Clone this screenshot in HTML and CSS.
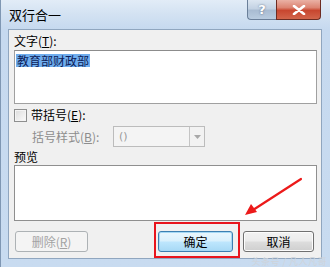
FILE: index.html
```html
<!DOCTYPE html>
<html lang="zh-CN">
<head>
<meta charset="utf-8">
<title>双行合一</title>
<link rel="stylesheet" href="styles.css">
</head>
<body>
<div class="window">
  <div class="titlebar">
    <span class="title">双行合一</span>
    <div class="caption-btns">
      <div class="cap-btn help">?</div>
      <div class="cap-btn close">
        <svg width="14" height="10" viewBox="0 0 14 10"><path d="M2 1 L12 9 M12 1 L2 9" stroke="#fff" stroke-width="2.6" stroke-linecap="round"/></svg>
      </div>
    </div>
  </div>
  <div class="client">
    <div class="label">文字(<u>T</u>):</div>
    <div class="textbox"><span class="sel">教育部财政部</span></div>
    <div class="check-row">
      <span class="checkbox"></span>
      <span class="check-label">带括号(<u>E</u>):</span>
    </div>
    <div class="combo-row">
      <span class="combo-label">括号样式(<u>B</u>):</span>
      <div class="combo">
        <span class="combo-value">()</span>
        <span class="combo-drop"><svg width="7" height="4" viewBox="0 0 7 4"><path d="M0 0 H7 L3.5 4 Z" fill="#a8a8a8"/></svg></span>
      </div>
    </div>
    <div class="label preview-label">预览</div>
    <div class="preview"></div>
    <div class="button-row">
      <div class="button disabled">删除(<u>R</u>)</div>
      <div class="button default">确定</div>
      <div class="button cancel">取消</div>
    </div>
  </div>
  <div class="highlight-box"></div>
  <svg class="arrow" width="70" height="45" viewBox="0 0 70 45">
    <path d="M58 2 L10 33" stroke="#ec1a1a" stroke-width="2.2" stroke-linecap="round"/>
    <path d="M2 38 L8 27 L14 35 Z" fill="#ec1a1a"/>
  </svg>
  <div class="watermark">头条号 / 凡人凡哥</div>
</div>
</body>
</html>
```

FILE: styles.css
```css
* { box-sizing: border-box; }
html, body {
  margin: 0;
  padding: 0;
  width: 330px;
  height: 267px;
  overflow: hidden;
  background: #c8dbf0;
}
body {
  font-family: "Noto Sans CJK SC", "DejaVu Sans", sans-serif;
  font-size: 12px;
  color: #000;
}
u { text-decoration: underline; text-underline-offset: 1px; }

.window {
  position: relative;
  width: 330px;
  height: 267px;
  padding: 0 8px 8px 7px;
  display: flex;
  flex-direction: column;
  background: linear-gradient(180deg, #e2ecf7 0px, #d3e2f2 14px, #c6d9ef 29px, #c8dbf0 100%);
  border-left: 1px solid #7f97b3;
}

.titlebar {
  height: 29px;
  display: flex;
  justify-content: space-between;
  align-items: flex-start;
  flex: none;
}
.title {
  font-size: 13px;
  line-height: 15px;
  margin-top: 7px;
  margin-left: 1px;
  color: #000;
}
.caption-btns {
  display: flex;
  margin-right: 1px;
}
.cap-btn {
  height: 20px;
  display: flex;
  align-items: center;
  justify-content: center;
  color: #fff;
  font-family: "DejaVu Sans", sans-serif;
  font-weight: bold;
  font-size: 13px;
  text-shadow: 0 0 2px #50607a;
}
.cap-btn.help {
  width: 29px;
  border: 1px solid #6a7f99;
  border-top: none;
  border-right: none;
  border-radius: 0 0 0 4px;
  background: linear-gradient(180deg, #dce6f1 0%, #c3d2e3 45%, #a9bcd2 55%, #b9cce0 100%);
}
.cap-btn.close {
  width: 45px;
  border: 1px solid #6d2c22;
  border-top: none;
  border-radius: 0 0 4px 0;
  background: linear-gradient(180deg, #eab1a5 0%, #dc8472 40%, #c8462f 55%, #d2654b 100%);
}

.client {
  flex: 1;
  background: #f0f0f0;
  border: 1px solid #90a6bf;
  padding: 4px 4px 0 5px;
  display: flex;
  flex-direction: column;
}
.label {
  height: 14px;
  line-height: 14px;
}
.textbox {
  margin-top: 2px;
  height: 54px;
  width: 303px;
  background: #fff;
  border: 1px solid #a0a0a0;
  border-top-color: #8c8c8c;
  padding: 1px 1px;
}
.sel {
  display: inline-block;
  background: #6fadee;
  color: #0c1c58;
  line-height: 13px;
  height: 13px;
  padding: 0 1px;
}
.check-row {
  margin-top: 4px;
  height: 14px;
  display: flex;
  align-items: center;
}
.checkbox {
  width: 13px;
  height: 13px;
  border: 1px solid #8e8f8f;
  background: linear-gradient(135deg, #dcdcdc, #fbfbfb);
  box-shadow: inset 0 0 0 1px #f4f4f4;
}
.check-label {
  margin-left: 4px;
  line-height: 14px;
}
.combo-row {
  margin-top: 4px;
  height: 21px;
  display: flex;
  align-items: center;
}
.combo-label {
  width: 99px;
  padding-left: 18px;
  color: #8d8d8d;
}
.combo {
  width: 92px;
  height: 21px;
  border: 1px solid #bcbcbc;
  background: #f4f4f4;
  display: flex;
  align-items: center;
  justify-content: space-between;
}
.combo-value {
  color: #9a9a9a;
  font-size: 11px;
  padding-left: 5px;
  font-family: "DejaVu Sans", sans-serif;
}
.combo-drop {
  width: 15px;
  height: 19px;
  border-left: 1px solid #c4c4c4;
  display: flex;
  align-items: center;
  justify-content: center;
  background: #f2f2f2;
}
.preview-label {
  margin-top: 3px;
}
.preview {
  margin-top: 1px;
  width: 303px;
  height: 56px;
  background: #fff;
  border: 1px solid #8f8f8f;
}
.button-row {
  margin-top: 10px;
  display: flex;
  align-items: center;
  padding-right: 3px;
}
.button {
  height: 21px;
  border: 1px solid #707070;
  border-radius: 3px;
  display: flex;
  align-items: center;
  justify-content: center;
  background: linear-gradient(180deg, #f2f2f2 0%, #ebebeb 48%, #dddddd 52%, #cfcfcf 100%);
  box-shadow: inset 0 0 0 1px #fcfcfc;
}
.button.disabled {
  width: 73px;
  margin-left: 1px;
  color: #a3a3a3;
  border-color: #adb2b5;
  background: #f4f4f4;
  box-shadow: none;
}
.button.default {
  width: 75px;
  margin-left: auto;
  border-color: #3c7fb1;
  box-shadow: inset 0 0 0 1px #a5d8f4;
  background: linear-gradient(180deg, #eaf6fd 0%, #d9f0fc 48%, #bee6fd 52%, #a7d9f5 100%);
}
.button.cancel {
  width: 71px;
  margin-left: 10px;
}

.highlight-box {
  position: absolute;
  left: 153px;
  top: 222px;
  width: 86px;
  height: 36px;
  border: 2px solid #e8141c;
}
.arrow {
  position: absolute;
  left: 242px;
  top: 177px;
}
.watermark {
  position: absolute;
  right: 3px;
  bottom: 0;
  font-size: 9px;
  line-height: 11px;
  color: #cfd4da;
  letter-spacing: 0.5px;
}
```
